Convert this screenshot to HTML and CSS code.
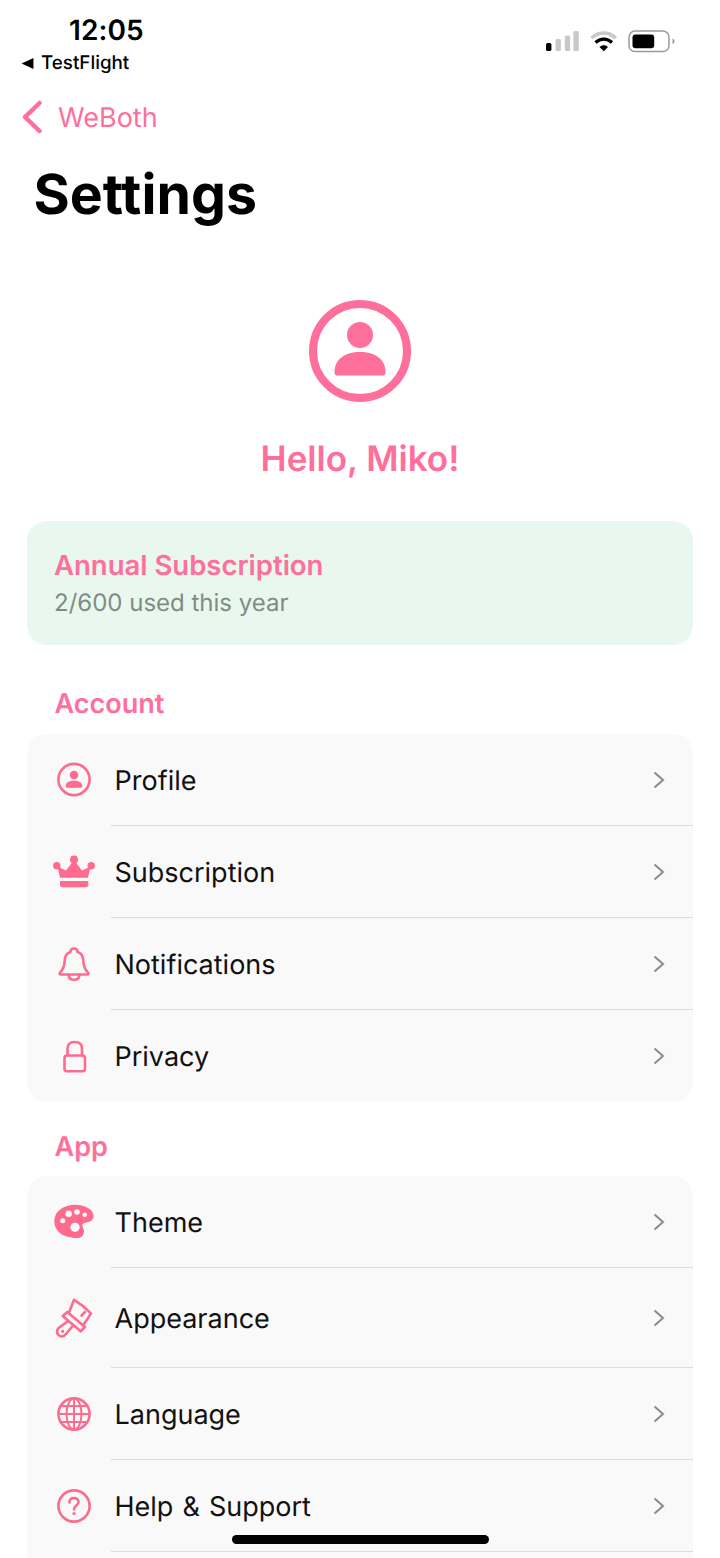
FILE: index.html
```html
<!DOCTYPE html>
<html lang="en">
<head>
<meta charset="utf-8">
<title>Settings</title>
<link rel="stylesheet" href="styles.css">
</head>
<body>
<main class="screen">
  <header class="status">
    <div class="status-left">
      <div class="time">12:05</div>
      <div class="testflight">
        <svg class="tf-arrow" viewBox="0 0 12 10"><path d="M0.5 5 11.5 0V10Z"/></svg>
        <span>TestFlight</span>
      </div>
    </div>
    <svg class="status-icons" viewBox="0 0 130 24" width="130" height="24">
      <rect x="1" y="13" width="5.4" height="8" rx="1.6" fill="#000"/>
      <rect x="10.5" y="9" width="5.4" height="12" rx="1.6" fill="#c9c9c9"/>
      <rect x="19.8" y="5.5" width="5.4" height="15.5" rx="1.6" fill="#c9c9c9"/>
      <rect x="28.4" y="1" width="5.4" height="20" rx="1.6" fill="#c9c9c9"/>
      <path d="M46.5 8C54 1.5 63 1.5 71 8" fill="none" stroke="#c9c9c9" stroke-width="3.6"/>
      <path d="M50.5 12.5C55.5 8 62 8 67 12.5" fill="none" stroke="#000" stroke-width="3.4"/>
      <path d="M54.500 17C57 14.500 60.500 14.500 63 17L58.800 21.200Z" fill="#000"/>
      <rect x="84" y="1" width="40" height="20.600" rx="6" fill="none" stroke="#9a9a9a" stroke-width="1.500"/>
      <rect x="87.500" y="4.500" width="21.700" height="13.700" rx="3" fill="#000"/>
      <path d="M127.500 8.500c1.500.5 2 1.500 2 2.800s-.5 2.300-2 2.800Z" fill="#9a9a9a"/>
    </svg>
  </header>

  <nav class="back">
    <svg class="back-chevron" viewBox="0 0 22 34"><path d="M18.500 3 4 17 18.500 31"/></svg>
    <span>WeBoth</span>
  </nav>

  <h1 class="title">Settings</h1>

  <section class="hello">
    <svg class="avatar" viewBox="0 0 102 102">
      <circle class="ring" cx="51" cy="51" r="47"/>
      <circle class="solid" cx="51" cy="35" r="13"/>
      <path class="solid" d="M25.500 72.500C25.500 59 36 52 51 52S76.500 59 76.500 72.500C76.500 74.500 75.500 75.500 74 75.500H28C26.500 75.500 25.500 74.500 25.500 72.500Z"/>
    </svg>
    <h2 class="hello-text">Hello, Miko!</h2>
  </section>

  <section class="plan">
    <div class="plan-name">Annual Subscription</div>
    <div class="plan-usage">2/600 used this year</div>
  </section>

  <h3 class="group-label">Account</h3>
  <ul class="group">
    <li class="row">
      <svg class="icon" viewBox="0 0 42 42"><circle class="line" cx="21" cy="20.500" r="15.600"/><circle class="fill" cx="21" cy="16" r="4.300"/><path class="fill" d="M12.700 27C12.700 23.500 16 21.700 21 21.700S29.300 23.500 29.300 27C29.300 28.300 28.700 28.800 27.800 28.800H14.200C13.300 28.800 12.700 28.300 12.700 27Z"/></svg>
      <span class="row-label">Profile</span>
      <svg class="chevron" viewBox="0 0 14 20"><path d="M2.500 2.500 11 10 2.500 17.500"/></svg>
    </li>
    <li class="row">
      <svg class="icon" viewBox="0 0 42 42"><circle class="fill" cx="21" cy="8.500" r="4"/><circle class="fill" cx="3.800" cy="14.700" r="3.700"/><circle class="fill" cx="38.200" cy="14.700" r="3.700"/><path class="fill" d="M7 26.800 4.500 15.500 13 19.500 21 9 29 19.500 37.500 15.500 35 26.800Z"/><path class="fill" d="M7 30H35.300V33.800C35.300 35.300 34.300 36.300 32.800 36.300H9.500C8 36.300 7 35.300 7 33.800Z"/></svg>
      <span class="row-label">Subscription</span>
      <svg class="chevron" viewBox="0 0 14 20"><path d="M2.500 2.500 11 10 2.500 17.500"/></svg>
    </li>
    <li class="row">
      <svg class="icon" viewBox="0 0 42 42"><path class="line" d="M21 5.500C18.800 5.500 17.500 7 17.300 9C13.500 10.300 11.800 13.500 11.700 17.500C11.500 23 10.500 26 7.200 29.300C6 30.500 6.700 31.500 8 31.500H34C35.300 31.500 36 30.500 34.800 29.300C31.500 26 30.500 23 30.300 17.500C30.200 13.500 28.500 10.300 24.700 9C24.500 7 23.200 5.500 21 5.500Z"/><path class="line" d="M15.500 31.800C15.800 35 18 36.800 21 36.800S26.200 35 26.500 31.800"/></svg>
      <span class="row-label">Notifications</span>
      <svg class="chevron" viewBox="0 0 14 20"><path d="M2.500 2.500 11 10 2.500 17.500"/></svg>
    </li>
    <li class="row">
      <svg class="icon" viewBox="0 0 42 42"><rect class="line" x="11.500" y="20.500" width="20.500" height="15.800" rx="2.500"/><path class="line" d="M14.500 20.500V13.500C14.500 9.500 17 7 21.700 7S29 9.500 29 13.500V20.500"/></svg>
      <span class="row-label">Privacy</span>
      <svg class="chevron" viewBox="0 0 14 20"><path d="M2.500 2.500 11 10 2.500 17.500"/></svg>
    </li>
  </ul>

  <h3 class="group-label">App</h3>
  <ul class="group">
    <li class="row">
      <svg class="icon" viewBox="0 0 42 42"><path class="fill" d="M22 3.700C33 3.700 40.500 9 40.500 15C40.500 20 36 21 33 21.500C29.500 22 28.500 24 30 26.500C32 30 31.500 37 24.500 37C11 37 1.300 31 1.300 20C1.300 10 11 3.700 22 3.700Z"/><circle class="hole" cx="9.700" cy="19.700" r="2.500"/><circle class="hole" cx="15.700" cy="12.700" r="3.200"/><circle class="hole" cx="24" cy="11" r="2.800"/><circle class="hole" cx="31.700" cy="13.700" r="2.300"/><circle class="hole" cx="22" cy="26.300" r="4.600"/></svg>
      <span class="row-label">Theme</span>
      <svg class="chevron" viewBox="0 0 14 20"><path d="M2.500 2.500 11 10 2.500 17.500"/></svg>
    </li>
    <li class="row row-tall">
      <svg class="icon" viewBox="0 0 42 42"><path class="line" d="M16 15.500 21 2.800C26.500 6 33 11 38 16.500L30 28.500"/><path class="line" d="M28.500 18.500 32 15"/><path class="line" d="M14.300 15 32 30 27.700 34.300 9.700 19Z"/><path class="line" d="M14.500 24.500 6.200 30.500C3.700 33 3.700 36 5.500 38S10.500 40 12.500 37.500L20 28.500"/><circle class="fill" cx="9.700" cy="34.300" r="1.600"/></svg>
      <span class="row-label">Appearance</span>
      <svg class="chevron" viewBox="0 0 14 20"><path d="M2.500 2.500 11 10 2.500 17.500"/></svg>
    </li>
    <li class="row">
      <svg class="icon" viewBox="0 0 42 42"><circle class="line" cx="21" cy="21" r="15.600"/><ellipse class="thin" cx="21" cy="21" rx="7.500" ry="15.600"/><path class="thin" d="M21 5.400V36.600M5.400 21H36.600M7.500 13H34.500M7.500 29H34.500"/></svg>
      <span class="row-label">Language</span>
      <svg class="chevron" viewBox="0 0 14 20"><path d="M2.500 2.500 11 10 2.500 17.500"/></svg>
    </li>
    <li class="row">
      <svg class="icon" viewBox="0 0 42 42"><circle class="line" cx="21" cy="21" r="15.600"/><path class="line" d="M16.500 17.500C16.500 14.500 18.500 13 21 13S25.500 14.500 25.500 17C25.500 20.500 21 20.500 21 24.500"/><circle class="fill" cx="21" cy="28.500" r="1.600"/></svg>
      <span class="row-label">Help &amp; Support</span>
      <svg class="chevron" viewBox="0 0 14 20"><path d="M2.500 2.500 11 10 2.500 17.500"/></svg>
    </li>
    <li class="row"></li>
  </ul>

  <div class="home-indicator"></div>
</main>
</body>
</html>
```

FILE: styles.css
```css
* { box-sizing: border-box; }
html, body { margin: 0; padding: 0; background: #fff; }
.screen {
  position: relative;
  width: 720px;
  height: 1558px;
  overflow: hidden;
  font-family: Inter, "Noto Sans", sans-serif;
  color: #000;
  text-rendering: geometricPrecision;
}
.status {
  height: 78px;
  display: flex;
  justify-content: space-between;
  padding: 13px 45px 0 21px;
}
.status-left { display: flex; flex-direction: column; }
.time {
  margin-left: 48px;
  font-size: 28px;
  line-height: 34px;
  font-weight: 600;
  letter-spacing: 0.1px;
}
.testflight {
  display: flex;
  align-items: center;
  gap: 7px;
  margin-top: 3px;
  font-size: 18.8px;
  line-height: 26px;
  font-weight: 500;
}
.tf-arrow { width: 13px; height: 11px; flex: none; fill: #000; }
.status-icons { margin-top: 17px; }
.back {
  height: 50px;
  margin-top: 14px;
  display: flex;
  align-items: center;
  gap: 15px;
  padding-left: 21px;
  color: #ff6f9c;
  font-size: 27px;
}
.back-chevron { width: 22px; height: 34px; fill: none; stroke: #ff6f9c; stroke-width: 4.5; stroke-linecap: round; stroke-linejoin: round; }
.title {
  margin: 21px 0 0;
  padding-left: 33.5px;
  font-size: 55.4px;
  line-height: 63px;
  font-weight: 700;
}
.hello { margin-top: 74px; display: flex; flex-direction: column; align-items: center; }
.avatar { width: 102px; height: 102px; }
.ring { fill: none; stroke: #ff6f9c; stroke-width: 8; }
.solid { fill: #ff6f9c; }
.hello-text {
  margin: 35px 0 0;
  color: #ff6f9c;
  font-size: 35px;
  line-height: 44px;
  font-weight: 600;
}
.plan {
  margin: 40px 27px 0;
  height: 124px;
  padding: 27px 27px 0;
  background: #e8f8ee;
  border-radius: 20px;
}
.plan-name { color: #ff6f9c; font-size: 27.5px; line-height: 34px; font-weight: 600; }
.plan-usage { margin-top: 6px; color: #7f8c85; font-size: 24px; line-height: 30px; }
.group-label {
  margin: 28px 0 12px;
  padding-left: 54.5px;
  color: #ff6f9c;
  font-size: 27px;
  line-height: 34px;
  font-weight: 600;
}
.plan + .group-label { margin-top: 42px; margin-bottom: 13px; }
.group {
  list-style: none;
  margin: 0 27px;
  padding: 0;
  background: #f9f9f9;
  border-radius: 20px;
}
.row {
  position: relative;
  height: 92px;
  display: flex;
  align-items: center;
  gap: 19.5px;
  padding: 0 26px;
  color: #111;
  font-size: 27px;
}
.row-tall { height: 100px; }
.row::after {
  content: "";
  position: absolute;
  left: 84px;
  right: 0;
  bottom: 0;
  height: 1px;
  background: #dcdcdc;
}
.group:first-of-type .row:last-child::after { display: none; }
.icon { width: 42px; height: 42px; flex: none; overflow: visible; }
.line { fill: none; stroke: #ff6b8e; stroke-width: 2.6; stroke-linejoin: round; stroke-linecap: round; }
.thin { fill: none; stroke: #ff6b8e; stroke-width: 2; }
.fill { fill: #ff6b8e; }
.hole { fill: #f9f9f9; }
.row-label { flex: 1; word-spacing: 1.5px; }
.chevron { width: 14px; height: 20px; fill: none; stroke: #8a8a8e; stroke-width: 2; margin-right: 1px; }
.home-indicator {
  position: absolute;
  left: 232px;
  top: 1535px;
  width: 257px;
  height: 9px;
  border-radius: 5px;
  background: #000;
}
```
